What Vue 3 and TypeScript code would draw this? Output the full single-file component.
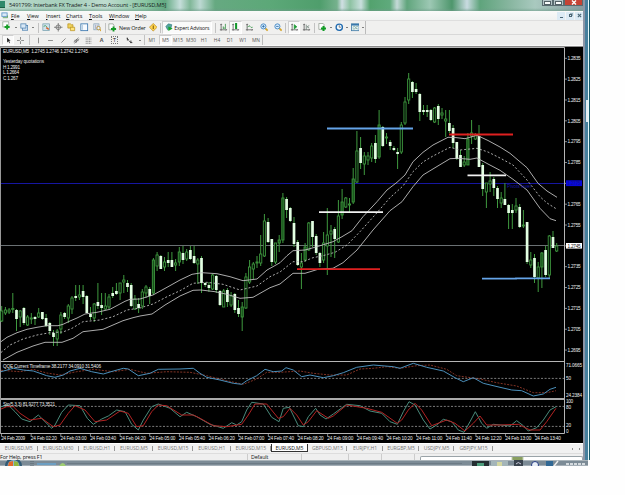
<script setup lang="ts">
type Candle = [number, number, number, number, string]

const menus = [
  { name: 'File', w: 16 }, { name: 'View', w: 19 }, { name: 'Insert', w: 20 }, { name: 'Charts', w: 23 },
  { name: 'Tools', w: 20 }, { name: 'Window', w: 26 }, { name: 'Help', w: 14 },
]

const mainTools: [string, number][] = [
  ['chart', 11], ['dd', 5], ['profiles', 12], ['dd', 6], ['sep', 4], ['market', 12], ['cross', 13], ['folder', 13],
  ['window', 13], ['tester', 12], ['sep', 4], ['order', 11], ['t:New Order', 29], ['diamond', 12], ['sep', 3],
  ['expert', 50], ['sep', 6], ['bars', 11], ['candle', 13], ['line', 14], ['zoomin', 17], ['zoomout', 10], ['sep', 5],
  ['scroll', 12], ['shift', 13], ['sep', 3], ['indicator', 12], ['dd', 5], ['clock', 12], ['dd', 4], ['template', 12], ['dd', 5],
]
const drawTools: [string, number][] = [
  ['cursor', 12], ['plus', 13], ['sep', 5], ['vline', 12], ['hline', 13], ['trend', 13], ['channel', 12], ['fibo', 13],
  ['letter', 13], ['label', 13], ['arrows', 16], ['dd', 5], ['sep', 4],
]
const periods = ['M1', 'M5', 'M15', 'M30', 'H1', 'H4', 'D1', 'W1', 'MN']

const tabs: [string, number][] = [
  ['EURUSD,M5', 37.5], ['EURUSD,M30', 41], ['EURUSD,H1', 36.5], ['EURUSD,M5', 38], ['EURUSD,M15', 40], ['EURUSD,H1', 37.5],
  ['EURUSD,M15', 40.5], ['EURUSD,M5', 37], ['GBPUSD,M15', 39], ['EURJPY,H1', 36], ['EURGBP,M5', 36], ['USDJPY,M5', 35],
  ['GBPJPY,M15', 39],
]

// high, body top, body bottom, low, kind: u = hollow, d = white, g = green filled
const candles: Candle[] = [
  [306, 311, 321, 322, 'u'], [307, 310, 313, 315, 'u'], [308, 310, 312, 314, 'u'], [293, 308.5, 309.5, 313, 'u'], [309, 310, 319, 331, 'd'],
  [310, 311, 317, 327, 'u'], [307, 308, 323, 325, 'd'], [315, 317, 325, 326, 'u'], [313, 318, 319, 324, 'u'], [316, 317, 319, 325, 'd'],
  [308, 313, 317, 318, 'u'], [312, 312, 319, 320, 'd'], [314, 318, 326, 327, 'd'], [322, 323, 331, 335, 'd'], [330, 333, 337, 346, 'd'],
  [329, 331, 339, 346, 'u'], [312, 315, 329, 334, 'u'], [312, 313, 317, 319, 'd'], [304, 306, 318, 323, 'u'], [296, 298, 309, 314, 'u'],
  [285, 296, 298, 301, 'd'], [285, 295, 297, 300, 'u'], [285, 291, 297, 304, 'd'], [295, 296, 313, 313, 'd'], [307, 314, 317, 320, 'd'],
  [303, 304, 318, 322, 'u'], [283, 302, 306, 309, 'd'], [293, 305, 308, 315, 'd'], [293, 306, 309, 310, 'u'], [294, 297, 307, 309, 'u'],
  [287, 293, 296, 298, 'd'], [283, 291, 294, 295, 'd'], [283, 283, 293, 300, 'u'], [275, 280, 282, 293, 'u'], [280, 283, 287, 292, 'd'],
  [283, 285, 306, 307, 'd'], [295, 299, 309, 310, 'u'], [298, 304, 308, 313, 'd'], [289, 292, 306, 309, 'u'], [285, 287, 293, 298, 'u'],
  [287, 289, 296, 304, 'd'], [258, 260, 293, 295, 'g'], [252, 255, 266, 271, 'u'], [255, 256, 269, 269, 'd'], [257, 262, 267, 271, 'u'],
  [252, 260, 263, 267, 'd'], [252, 260, 267, 267, 'd'], [259, 263, 265, 271, 'u'], [247, 252, 262, 266, 'g'], [246, 253, 260, 264, 'd'],
  [249, 252, 259, 261, 'u'], [246, 250, 259, 260, 'd'], [246, 256, 263, 264, 'd'], [258, 260, 264, 284, 'u'], [256, 258, 283, 293, 'd'],
  [282, 283, 285, 287, 'd'], [282, 285, 288, 292, 'd'], [274, 275, 289, 290, 'u'], [275, 276, 290, 293, 'd'], [290, 291, 305, 306, 'd'],
  [289, 291, 307, 307, 'u'], [288, 290, 302, 307, 'd'], [292, 296, 305, 307, 'u'], [293, 294, 310, 313, 'd'], [300, 308, 314, 317, 'd'],
  [302, 307, 317, 331, 'g'], [273, 277, 308, 309, 'u'], [260, 267, 282, 284, 'u'], [262, 264, 269, 279, 'u'], [256, 262, 263, 268, 'u'],
  [235, 254, 263, 266, 'u'], [214, 221, 256, 257, 'u'], [218, 222, 242, 243, 'd'], [239, 239, 262, 266, 'd'], [243, 243, 262, 264, 'u'],
  [235, 240, 243, 252, 'g'], [193, 198, 240, 243, 'g'], [197, 199, 210, 218, 'd'], [207, 208, 221, 222, 'd'], [217, 223, 244, 247, 'd'],
  [240, 242, 265, 266, 'd'], [253, 263, 267, 289, 'u'], [243, 247, 260, 262, 'g'], [222, 223, 250, 251, 'u'], [221, 221, 237, 247, 'd'],
  [234, 236, 253, 255, 'd'], [252, 253, 263, 267, 'd'], [232, 243, 260, 263, 'u'], [208, 235, 246, 275, 'u'], [225, 231, 234, 257, 'u'],
  [227, 229, 239, 258, 'd'], [200, 216, 242, 243, 'u'], [189, 202, 215, 219, 'g'], [197, 198, 207, 208, 'u'], [198, 204, 205, 213, 'u'],
  [168, 179, 202, 204, 'g'], [131, 151, 182, 183, 'u'], [137, 148, 163, 169, 'd'], [152, 156, 164, 175, 'u'], [152, 156, 160, 165, 'u'],
  [143, 146, 158, 162, 'u'], [135, 143, 159, 163, 'd'], [110, 125, 157, 159, 'g'], [126, 127, 146, 147, 'd'], [133, 137, 138, 144, 'u'],
  [140, 142, 146, 150, 'd'], [146, 148, 150, 151, 'd'], [148, 152, 154, 169, 'd'], [122, 125, 152, 154, 'u'], [97, 102, 123, 125, 'u'],
  [73, 79, 100, 104, 'u'], [81, 82, 92, 98, 'd'], [83, 89, 92, 94, 'd'], [93, 94, 112, 121, 'd'], [105, 110, 112, 115, 'd'],
  [105, 110, 112, 117, 'd'], [109, 110, 120, 121, 'd'], [107, 108, 122, 123, 'u'], [104, 106, 119, 125, 'd'], [108, 113, 115, 119, 'u'],
  [110, 119, 121, 137, 'u'], [110, 123, 131, 133, 'd'], [125, 128, 143, 148, 'd'], [142, 142, 159, 160, 'd'], [150, 155, 167, 167, 'd'],
  [156, 162, 165, 167, 'u'], [133, 139, 165, 165, 'g'], [120, 133, 136, 144, 'u'], [133, 135, 139, 140, 'u'], [125, 136, 167, 167, 'd'],
  [163, 165, 189, 196, 'd'], [183, 183, 192, 208, 'u'], [172, 181, 184, 192, 'u'], [177, 179, 188, 196, 'd'], [186, 188, 199, 208, 'd'],
  [192, 198, 203, 208, 'u'], [183, 199, 205, 205, 'd'], [204, 205, 213, 229, 'd'], [204, 210, 213, 229, 'd'], [198, 206, 210, 213, 'u'],
  [204, 207, 227, 228, 'd'], [210, 225, 226, 228, 'u'], [222, 222, 262, 264, 'd'], [252, 260, 265, 268, 'u'], [254, 258, 277, 283, 'd'],
  [262, 267, 278, 292, 'u'], [252, 253, 267, 288, 'g'], [246, 250, 275, 277, 'd'], [235, 236, 275, 278, 'u'], [231, 237, 248, 248, 'd'],
  [243, 246, 251, 252, 'u'],
]
const cx = (i: number): number => 1.7 + 3.7 * i

const upper = '1,341.7 7,337.3 17,332.7 27,329.3 37,327.3 47,325.7 58,325.7 63,324.3 70,321 77,318 85,314 97,312.3 110,309.3 125,301.3 130,299.3 140,299 153,295 167,287.3 180,280 192,274.3 202,272.7 217,273.7 230,276.7 243,280.7 257,279 267,270 273,266.7 280,262.7 287,255.7 293,250.7 305,250 317,246.7 333,241.7 342,236.7 352,230.7 363,216.7 377,201.7 387,190 397,182.3 405,175 413,161.7 423,152.3 433,145 448,137.3 456,137.6 465,138.7 477,135.3 488,140.5 500,147 510,153.3 527,167.7 538,183.3 547,191 557,197.3'
const middle = '1,352.5 10,345 23,339 37,335 50,332.7 63,332 72,328.3 83,321.7 100,320 113,316.7 127,310 140,308 153,304 167,296.7 180,290.7 193,283.3 207,282.3 223,284.3 240,290 257,286 270,276.7 280,272 293,261.7 303,261.7 313,257.7 323,255.7 335,252.3 347,245 360,231.7 377,212.7 390,197.7 403,186 413,171.7 423,162 433,156 450,147.3 460,150 477,148.3 488,152 500,158 513,165 527,180 540,196.7 547,203 557,209.3'
const lower = '3,360 17,352.3 33,346 45,342.3 62,342.3 73,338.3 83,331.7 103,329.3 123,320.7 133,317.7 140,316 152,314 165,305 180,296 193,290.3 201,290 215,291.7 227,294.3 240,298.3 253,297.3 270,287.7 280,284 293,273.3 305,273.3 318,269.3 333,268.3 343,262.7 357,250 373,230 390,210.7 402,201.7 413,186.7 423,175 437,166.5 450,158.7 458,158.3 470,159.3 477,158 488,164 500,170.3 513,179.3 527,190 540,208.3 550,218.7 556,220.7'

// oscillator series are kept at three units per pixel
const scale = (pts: number[][]): string => pts.map(([x, y]) => `${(x / 3).toFixed(1)},${(355 + y / 3).toFixed(1)}`).join(' ')
const qqeFast = scale([[3, 50], [40, 40], [70, 45], [100, 48], [120, 55], [140, 62], [165, 67], [190, 60], [210, 48], [240, 40], [275, 50], [310, 57], [340, 48], [370, 40], [385, 42], [415, 62], [450, 55], [475, 43], [540, 42], [580, 40], [600, 55], [620, 67], [660, 75], [700, 85], [725, 88], [740, 77], [770, 62], [795, 43], [820, 50], [845, 48], [858, 38], [880, 45], [905, 65], [930, 60], [970, 68], [1000, 62], [1030, 53], [1070, 37], [1120, 30], [1180, 35], [1200, 40], [1240, 25], [1280, 37], [1330, 48], [1365, 68], [1390, 80], [1420, 68], [1450, 85], [1500, 97], [1535, 105], [1565, 107], [1600, 123], [1630, 117], [1650, 103], [1668, 97]])
const qqeSlow = scale([[3, 46], [60, 50], [100, 43], [140, 54], [180, 60], [230, 50], [280, 43], [340, 50], [390, 43], [440, 55], [500, 50], [570, 52], [620, 62], [680, 77], [730, 88], [770, 72], [800, 52], [840, 52], [900, 48], [940, 55], [990, 60], [1040, 60], [1080, 42], [1120, 40], [1160, 35], [1200, 40], [1250, 32], [1290, 30], [1340, 43], [1370, 62], [1440, 72], [1490, 83], [1550, 93], [1600, 113], [1640, 113], [1668, 107]])
const stochMain = scale([[3, 155], [25, 150], [45, 170], [65, 192], [90, 200], [115, 180], [135, 200], [155, 220], [165, 210], [185, 172], [205, 150], [240, 152], [262, 190], [280, 208], [305, 192], [325, 183], [350, 165], [375, 170], [395, 208], [415, 225], [430, 195], [455, 155], [475, 147], [510, 160], [540, 185], [560, 172], [590, 185], [630, 208], [670, 220], [695, 203], [710, 210], [725, 200], [740, 165], [755, 142], [790, 147], [815, 187], [837, 200], [850, 160], [868, 157], [895, 212], [910, 215], [925, 185], [947, 160], [960, 180], [978, 192], [1000, 177], [1040, 148], [1080, 152], [1110, 168], [1145, 175], [1170, 200], [1192, 208], [1210, 170], [1227, 140], [1245, 150], [1270, 195], [1290, 222], [1310, 210], [1330, 193], [1355, 200], [1375, 225], [1392, 232], [1410, 200], [1426, 170], [1445, 205], [1460, 220], [1480, 208], [1530, 213], [1550, 197], [1570, 212], [1585, 228], [1610, 218], [1630, 195], [1650, 165], [1668, 155]])
const stochSignal = scale([[3, 162], [20, 155], [40, 155], [60, 175], [90, 195], [125, 190], [160, 215], [180, 210], [205, 175], [225, 152], [255, 165], [285, 200], [320, 195], [360, 168], [385, 175], [410, 215], [430, 212], [455, 170], [475, 150], [500, 152], [545, 180], [580, 180], [600, 190], [640, 212], [680, 215], [725, 208], [745, 180], [765, 147], [800, 147], [835, 190], [850, 185], [870, 160], [890, 180], [910, 210], [925, 200], [950, 167], [985, 190], [1000, 183], [1040, 150], [1100, 160], [1145, 172], [1192, 205], [1205, 195], [1225, 165], [1245, 145], [1265, 165], [1295, 212], [1340, 195], [1365, 205], [1395, 228], [1420, 205], [1440, 183], [1460, 210], [1500, 210], [1555, 208], [1590, 225], [1620, 225], [1640, 200], [1668, 160]])

const prices: string[] = Array.from({ length: 15 }, (_, i) => (1.2835 - i * 0.001).toFixed(4))
const times = ['2009', '02:20', '03:00', '03:40', '04:20', '05:00', '05:40', '06:20', '07:00', '07:40', '08:20', '09:00', '09:40', '10:20', '11:00', '11:40', '12:20', '13:00', '13:40']
</script>

<template>
  <div class="screen">
    <div class="window">
      <div class="body">
        <div class="title">
          <i class="appicon"></i>
          <span class="caption">5491799: Interbank FX Trader 4 - Demo Account - [EURUSD,M5]</span>
          <div class="winbtns">
            <b class="min"></b><b class="max"></b>
            <b class="close"><svg viewBox="0 0 6 5"><path d="M1 .5l4 4M5 .5l-4 4" stroke="#fff" stroke-width="1.4" /></svg></b>
          </div>
        </div>
        <div class="menu">
          <svg class="menuicon" viewBox="0 0 8 8"><rect x="1" y="1" width="6" height="4" fill="#dcebf8" stroke="#5d93c4" /><path d="M2 6.5h5.5V4" fill="none" stroke="#5aa05a" /></svg>
          <span v-for="m in menus" :key="m.name" :style="{ width: m.w + 'px' }"><u>{{ m.name[0] }}</u>{{ m.name.slice(1) }}</span>
          <div class="childbtns">
            <b><i class="c-min"></i></b><b><i class="c-max"></i></b>
            <b><svg viewBox="0 0 6 6"><path d="M1 1l4 4M5 1L1 5" stroke="#486675" stroke-width="1.3" /></svg></b>
          </div>
        </div>
        <div class="bar first">
          <div v-for="([kind, w], i) in mainTools" :key="i" class="tool" :class="[kind.startsWith('t:') ? 'text' : kind]" :style="{ width: w + 'px' }">
            <i v-if="kind === 'sep'" class="sep"></i>
            <i v-else-if="kind === 'dd'" class="arrow"></i>
            <span v-else-if="kind.startsWith('t:')">{{ kind.slice(2) }}</span>
            <template v-else>
              <svg viewBox="0 0 10 10">
                <g v-if="kind === 'chart'"><rect x="1" y="1" width="7" height="6" fill="#fff" stroke="#8aa08a" stroke-width=".8" /><path d="M6 4v6M3 7h6" stroke="#18a028" stroke-width="2.2" /></g>
                <g v-else-if="kind === 'profiles'" fill="#d8e8f6" stroke="#4d80b0" stroke-width=".9"><rect x="3" y="3" width="6" height="5.5" /><rect x="1" y="1" width="6" height="5" /></g>
                <g v-else-if="kind === 'market'"><rect x="1" y="1" width="8" height="8" fill="#cfe2ec" stroke="#6f9cab" stroke-width=".8" /><path d="M2 4l2-1 2 2" stroke="#3b9a53" fill="none" /><path d="M5 5.5l3 2" stroke="#d6602b" stroke-width="1.6" /></g>
                <g v-else-if="kind === 'cross'" fill="none" stroke="#666" stroke-width=".9"><circle cx="5" cy="5" r="2.7" /><path d="M5 0v10M0 5h10" /></g>
                <g v-else-if="kind === 'folder'"><path d="M1 1h3l1 1h2v4H1z" fill="#f0d35c" stroke="#b48c19" stroke-width=".8" /><path d="M4 5h5v4H4z" fill="#ffe47a" stroke="#b48c19" stroke-width=".8" /></g>
                <g v-else-if="kind === 'window'"><rect x="1" y="1" width="8" height="8" fill="#f7fbff" stroke="#3c78b0" stroke-width="1" /><path d="M3 2v6" stroke="#a9c4dc" /></g>
                <g v-else-if="kind === 'tester'"><rect x="1" y="1" width="6" height="7" fill="#e5edf2" stroke="#7d9bb2" stroke-width=".8" /><path d="M3 2v5M5 2v5" stroke="#88a" stroke-width=".7" /><circle cx="6.5" cy="6" r="2" fill="#e8f4ff" stroke="#b58b2d" /><path d="M8 7.5l2 2" stroke="#d49b20" stroke-width="1.4" /></g>
                <g v-else-if="kind === 'order'"><path d="M1 1h5l1 2v5H1z" fill="#fff" stroke="#849184" stroke-width=".8" /><path d="M6.5 4v6M3.5 7h6" stroke="#169b27" stroke-width="2.2" /></g>
                <g v-else-if="kind === 'diamond'"><path d="M5 .5L9.5 5 5 9.5.5 5z" fill="#ffd54f" stroke="#b88514" stroke-width=".8" /><path d="M5 3v4" stroke="#7a5608" stroke-width="1.2" /></g>
                <g v-else-if="kind === 'expert'"><path d="M1 4l3-3 4 1-1 4-4 2z" fill="#57a7a0" stroke="#257078" stroke-width=".7" /><path d="M4 4l5 2.5-5 3z" fill="#15a52a" /></g>
                <g v-else-if="['bars', 'candle', 'line', 'scroll', 'shift'].includes(kind)" fill="none" stroke="#555" stroke-width=".9">
                  <path d="M2.5 1v8M1 8h8M1.5 2.2l1-1 1 1M8 7l1 1-1 1" />
                  <path v-if="kind === 'bars'" d="M5 4v3M7.5 1v6M5 6h2" stroke="#278e39" />
                  <path v-else-if="kind === 'candle'" d="M6 0v7M6 1.5v4" stroke="#12972a" stroke-width="2.4" />
                  <path v-else-if="kind === 'line'" d="M3 5q2-3 3-1t3 1" stroke="#278e39" />
                  <path v-else-if="kind === 'scroll'" d="M5 2v5l3-2.5z" fill="#1b9b33" stroke="#1b9b33" />
                  <path v-else d="M5 2v6M8.5 3L6 4.5 8.5 6" stroke="#667b72" />
                </g>
                <g v-else-if="kind === 'zoomin' || kind === 'zoomout'"><path d="M6 6l3 3" stroke="#d4a42c" stroke-width="2" /><circle cx="4" cy="4" r="3" fill="#dceeff" stroke="#397fbd" /><path :d="kind === 'zoomin' ? 'M4 2.5v3M2.5 4h3' : 'M2.5 4h3'" stroke="#286da8" /></g>
                <g v-else-if="kind === 'indicator'"><path d="M1 .5h5l1 1v6H1z" fill="#fff" stroke="#859085" stroke-width=".8" /><path d="M6.5 3.5v6M3.5 6.5h6" stroke="#109c25" stroke-width="2.4" /></g>
                <g v-else-if="kind === 'clock'"><circle cx="5" cy="5" r="3.7" fill="#f5fbff" stroke="#236cb0" stroke-width="1.6" /><path d="M5 2.5V5h2" fill="none" stroke="#555" stroke-width=".8" /></g>
                <g v-else-if="kind === 'template'"><rect x=".5" y="1" width="9" height="8" fill="#e5f1f7" stroke="#467fa8" /><path d="M.5 2h9" stroke="#3978ac" stroke-width="2" /><path d="M2 5l2-1 1 1 3-1M2 7h2l1-1 3 1" fill="none" stroke="#598c73" stroke-width=".7" /></g>
              </svg>
              <span v-if="kind === 'expert'">Expert Advisors</span>
            </template>
          </div>
        </div>
        <div class="bar second">
          <div v-for="([kind, w], i) in drawTools" :key="i" class="tool" :class="kind" :style="{ width: w + 'px' }">
            <i v-if="kind === 'sep'" class="sep"></i>
            <i v-else-if="kind === 'dd'" class="arrow"></i>
            <span v-else-if="kind === 'letter'">A</span>
            <span v-else-if="kind === 'label'" class="boxed">T</span>
            <svg v-else viewBox="0 0 10 10" fill="none" stroke="#666" stroke-width="1">
              <path v-if="kind === 'cursor'" d="M3 1v7l2-2 1 3 1-.5-1-3h2z" fill="#222" stroke="none" />
              <path v-else-if="kind === 'plus'" d="M5 0v4M5 6v4M0 5h4M6 5h4" />
              <path v-else-if="kind === 'vline'" d="M5 1v8" />
              <path v-else-if="kind === 'hline'" d="M1.500 5h7" />
              <path v-else-if="kind === 'trend'" d="M2 8l6-6" />
              <path v-else-if="kind === 'channel'" d="M1 7l7-6M2 9l7-6M3 4v4M5 3v5M7 3v3" />
              <path v-else-if="kind === 'fibo'" d="M1 1.500h8M1 4h8M1 6.500h8M1 9h8" stroke-dasharray="1.5 .8" />
              <path v-else d="M1 2l3 2M2 1v4M4 5l3 3M6 8h3M7 5v3" stroke="#333" stroke-width="1.3" />
            </svg>
          </div>
          <span v-for="p in periods" :key="p" class="period" :class="{ on: p === 'M5' }">{{ p }}</span>
        </div>
        <svg class="chart" viewBox="0 46 583 397" width="583" height="397">
          <rect x="0" y="46" width="583" height="397" fill="#000" />
          <g shape-rendering="crispEdges">
            <rect x="0" y="46" width="583" height="1" fill="#8c8c8c" />
            <rect x="0" y="47" width="1" height="387" fill="#999" />
            <rect x="1" y="183" width="563" height="1" fill="#1616a0" />
            <rect x="1" y="245" width="563" height="1" fill="#6a7073" />
          </g>
          <path d="M1 47.5H564.5V433.5H1M1 361.5H564" fill="none" stroke="#b5b5b5" />
          <rect x="1" y="398" width="564" height="2" fill="#aaa" />

          <g v-for="([h, t, b, l, k], i) in candles" :key="i">
            <line :x1="cx(i)" :x2="cx(i)" :y1="h" :y2="k === 'u' ? t : l" stroke="#3f9a3f" />
            <line v-if="k === 'u'" :x1="cx(i)" :x2="cx(i)" :y1="b" :y2="l" stroke="#3f9a3f" />
            <rect :x="cx(i) - (k === 'd' ? 1.35 : 1.1)" :y="t" :width="k === 'd' ? 2.7 : 2.2" :height="Math.max(b - t, 1)"
              :fill="k === 'd' ? '#e2ffe2' : k === 'g' ? '#17501b' : '#031006'" :stroke="k === 'd' ? 'none' : '#3f9a3f'" stroke-width=".85" />
          </g>

          <g fill="none" stroke="#bebebe" stroke-width=".9">
            <polyline :points="upper" /><polyline :points="lower" />
            <polyline :points="middle" stroke-dasharray="2 2" />
          </g>
          <g stroke-width="1.8">
            <path d="M327 128.5H413" stroke="#65a4e8" /><path d="M482 278.7H516L516 278.3H550" fill="none" stroke="#65a4e8" />
            <path d="M319 212.2H383M467.5 175.3H506" stroke="#f2f2f2" />
            <path d="M297 269.2H380M449 134.5H513" stroke="#df2020" />
          </g>
          <text x="507" y="188" textLength="24" class="t pivot">Pivots level</text>

          <g stroke="#999" stroke-width=".8" stroke-dasharray="2 1.6"><path d="M1 378.4H564M1 406.4H564M1 426.4H564" /></g>
          <g fill="none" stroke-width="1">
            <polyline :points="qqeSlow" stroke="#a2402e" stroke-width=".8" stroke-dasharray="2 1.3" /><polyline :points="qqeFast" stroke="#4b8fba" />
            <polyline :points="stochMain" stroke="#4a8b7c" /><polyline :points="stochSignal" stroke="#b32323" />
          </g>

          <g class="t">
            <text x="3" y="53" textLength="85">EURUSD,M5&#160; 1.2745 1.2746 1.2742 1.2745</text>
            <text x="3" y="63" textLength="41">Yesterday quotations</text>
            <text x="3" y="68.6" textLength="17">H 1.2991</text>
            <text x="3" y="74.2" textLength="16">L 1.2664</text>
            <text x="3" y="79.8" textLength="15">C 1.267</text>
            <text x="3" y="368.3" textLength="98">QQE Current Timeframe 38.2177 34.0910 31.5406</text>
            <text x="3" y="405.8" textLength="52">Sto(5,3,3) 81.9277 73.3521</text>
            <g v-for="(p, i) in prices" :key="p">
              <path :d="`M565 ${58.3 + i * 20.84}h2`" stroke="#aaa" stroke-width=".8" />
              <rect v-if="i === 6" x="566" y="180.3" width="16" height="5.8" fill="#0808d8" />
              <rect v-if="i === 9" x="566" y="243" width="16" height="5.6" fill="#fff" />
              <text x="567.5" :y="60 + i * 20.84" textLength="13.2" :class="{ navy: i === 6, dark: i === 9 }">{{ p }}</text>
            </g>
            <text x="566" y="367" textLength="16">71.0665</text>
            <text x="566" y="380" textLength="5">50</text>
            <text x="566" y="396.6" textLength="16">24.2384</text>
            <text x="566" y="403.2" textLength="7">100</text>
            <text x="566" y="408.7" textLength="5">80</text>
            <text x="566" y="427" textLength="5">20</text>
            <text x="566" y="432.6">0</text>
            <g v-for="(t, i) in times" :key="t">
              <path :d="`M${1.5 + i * 29.65} 434v2.500`" stroke="#aaa" stroke-width=".8" />
              <text :x="1.2 + i * 29.65" y="439.6" :textLength="i ? 26 : 24">24 Feb {{ t }}</text>
            </g>
          </g>
        </svg>
        <div class="tabs">
          <span v-for="([name, w], i) in tabs" :key="i" :class="{ active: i === 7 }" :style="{ width: w + 'px' }">{{ name }}</span>
          <div class="scroller"><i></i><i class="r"></i></div>
        </div>
        <div class="status">
          <span class="help">For Help, press F1</span><span class="profile">Default</span><span class="c3"></span><span class="c4"></span><span class="c5"></span>
          <span class="c6"><i></i></span>
        </div>
      </div>
      <div class="edge"></div>
    </div>
    <svg class="taskbar" viewBox="0 0 588 6" width="588" height="6">
      <rect width="588" height="6" fill="#7c8b96" /><rect width="588" height="1" fill="#aab4ba" /><rect y="5" width="588" height="1" fill="#a4aeb6" />
      <circle cx="13.5" cy="6" r="8.5" fill="#315b76" /><circle cx="13.5" cy="6" r="6" fill="#8fb7ce" />
      <path d="M9 2l4-1v5H8z" fill="#e3692c" /><path d="M14 1l4 1 1 4h-5z" fill="#91b83f" />
      <path d="M31 1v5M33 1v5" stroke="#59666f" stroke-dasharray="1 1" /><rect x="37" y="3" width="19" height="2" fill="#6c9ec2" /><path d="M59 6q4-6 7 0z" fill="#9fce72" />
      <path d="M67 3.500H462" stroke="#6c7a85" />
      <rect x="472" y="1" width="17" height="5" fill="#242e32" /><rect x="477" y="3" width="7" height="3" fill="#4c9d7c" />
      <rect x="491" y="1" width="17" height="5" fill="#a4b5b9" /><rect x="497" y="2" width="5" height="4" fill="#d4d7a2" />
      <rect x="514" y="0" width="9" height="6" fill="#39434e" /><path d="M516 4q2-3 5 0" stroke="#ccd" fill="none" />
      <circle cx="535" cy="5" r="3.500" fill="#e7eef6" stroke="#263c83" /><rect x="546" y="1" width="7" height="5" fill="#316894" /><path d="M554 6l4-5" stroke="#eee" stroke-width="1.5" />
      <path d="M566 4h19" stroke="#d4dade" stroke-width="1.8" stroke-dasharray="3 1" />
    </svg>
  </div>
</template>

<style>
body { background: #fff; overflow: hidden; }
</style>

<style scoped>
.screen { width: 625px; height: 495px; background: #fefefe; font-family: "Open Sans", "Noto Sans", sans-serif; color: #333; overflow: hidden; }
.window { display: flex; width: 590px; height: 460px; }
.body { width: 583px; display: flex; flex-direction: column; overflow: hidden; }
.edge { width: 7px; height: 460px; background: linear-gradient(#e4edf2, #e4edf2) 3px 100px / 2px 22px no-repeat, linear-gradient(90deg, #8c95a6 0 2px, #467f9d 2px 5px, #e6f8fa 5px 6px, #17596a 6px); }
.title { height: 11px; flex: none; display: flex; align-items: center; background: linear-gradient(180deg, #fff0 8px, #6e9c8999), linear-gradient(90deg, #b9d9cb 0, #a5cfbb 70px, #bfdccf 105px, #8cc8a5 145px, #62a981 165px, #c6dedb 180px, #80b798 190px, #bdd9d3 200px, #66a981 215px, #5ca878 270px, #4f9e6c 320px, #76b18d 337px, #d1dfe4 342px, #8dc2a2 350px, #c9dfdd 361px, #53a26e 370px, #5faa7c 390px, #c5dad8 397px, #60a57c 407px, #9dc8b4 430px, #4e966c 452px, #c9dbe1 467px, #5fa47c 480px, #88b6a0 510px, #a9c9bf 535px, #879aa0 583px); }
.appicon { width: 5px; height: 6px; margin-bottom: 2px; background: #2e896a; border-bottom: 1px solid #196143; }
.caption { margin: -2px 0 0 4px; font-size: 5.7px; letter-spacing: -.17px; white-space: nowrap; color: #17221e; }
.winbtns { margin-left: auto; align-self: flex-start; display: flex; height: 6px; }
.winbtns b { display: flex; justify-content: center; align-items: center; width: 11px; border: 1px solid #596b70; border-top: 0; box-sizing: border-box; background: #b5c4c7; }
.winbtns b::before { content: ""; width: 5px; height: 2px; background: #f8fbfb; border: .5px solid #536166; }
.winbtns .close { width: 19px; background: #c54234; }
.winbtns .close::before { display: none; }
.close svg { width: 6px; height: 5px; }
.menu { height: 10px; flex: none; display: flex; align-items: center; background: linear-gradient(#f9faf9, #f0f2f1); border-bottom: 1px solid #dedede; box-sizing: border-box; font-size: 5.5px; letter-spacing: -.08px; color: #111; }
.menu > span { white-space: nowrap; line-height: 8px; }
.menuicon { width: 7px; height: 7px; margin: 0 3px 0 1px; }
.childbtns { margin-left: auto; display: flex; gap: 1px; }
.childbtns b { width: 8px; height: 8px; display: flex; align-items: center; justify-content: center; background: #dcebf5; }
.childbtns svg { width: 5px; height: 5px; }
.childbtns .c-min { width: 3px; height: 1px; margin-top: 3px; background: #4a6675; }
.childbtns .c-max { width: 3px; height: 3px; border: 1px solid #4a6675; box-sizing: border-box; box-shadow: 1px -1px 0 #9bb0bc; }
.bar { display: flex; align-items: center; background: #f0f0ef; box-sizing: border-box; flex: none; padding-left: 2px; }
.first { height: 13px; }
.second { height: 12px; border-top: 1px solid #d8d8d8; border-bottom: 1px solid #fafafa; }
.first .tool:last-child, .period:last-child { border-right: 1px solid #bbb; }
.tool { height: 100%; box-sizing: border-box; display: flex; align-items: center; justify-content: center; flex: none; font-size: 5.4px; letter-spacing: -.1px; white-space: nowrap; color: #111; }
.tool svg { width: 8.5px; height: 8.5px; flex: none; }
.second .tool svg { width: 7px; height: 7px; }
.tool.text { justify-content: flex-start; padding-left: 1px; }
.tool.expert, .tool.candle, .tool.scroll, .second .tool.cursor { background: #fafafa; border: 1px solid #d0d0d0; border-right-color: #fff; border-bottom-color: #fff; }
.tool.expert { gap: 1px; font-size: 5.1px; letter-spacing: -.12px; }
i.sep { width: 1px; height: 10px; background: #c2c2c2; }
.arrow { width: 0; height: 0; border: 1.2px solid transparent; border-top: 1.6px solid #111; border-bottom: 0; }
.boxed { border: .5px dotted #777; line-height: 6px; padding: 0 1px; }
.letter { font-weight: 700; }
.second .letter { color: #555; }
.period { width: 13px; height: 100%; box-sizing: border-box; display: flex; align-items: center; justify-content: center; font-size: 4.9px; color: #555; border-right: 1px solid transparent; }
.period.on { background: #fafafa; border: 1px solid #ccc; border-right-color: #fff; border-bottom-color: #fff; }
.chart { display: block; flex: none; }
.t { font-size: 4.7px; fill: #ececec; font-family: "Liberation Sans", sans-serif; }
.t .dark { fill: #111; }
.t .navy { fill: #10108c; }
.pivot { fill: #1818a0; }
.tabs { height: 10px; flex: none; display: flex; background: #f1f1f1; border-top: 1px solid #fff; box-sizing: border-box; font-size: 5.1px; color: #777; }
.tabs > span { box-sizing: border-box; display: flex; align-items: center; justify-content: center; height: 8px; letter-spacing: -.1px; background: linear-gradient(#999, #999) right center / 1px 5px no-repeat; }
.tabs .active { background: #fff; border: 1px solid #333; border-top: 0; color: #111; }
.scroller { margin-left: auto; display: flex; gap: 6px; align-items: center; padding-right: 3px; }
.scroller i { border: 1.5px solid transparent; border-right-color: #333; border-left: 0; }
.scroller .r { border-left: 1.5px solid #333; border-right: 0; }
.status { height: 7px; flex: none; display: flex; background: #efefef; border-top: 1px solid #ddd; box-sizing: border-box; font-size: 5.3px; letter-spacing: -.1px; line-height: 7px; color: #111; }
.status > span { box-sizing: border-box; border-right: 1px solid #ccc; white-space: nowrap; }
.help { width: 248px; }
.profile { width: 54px; padding-left: 3px; }
.c3 { width: 47px; } .c4 { width: 33px; } .c5 { width: 33px; }
.status .c6 { flex: 1; padding: 2px 0 0 5px; border: 0; }
.c6 i { display: block; height: 5px; border: 1px solid #9aa3a8; border-bottom: 0; border-radius: 2px 2px 0 0; background: linear-gradient(90deg, #fff 0 90px, #899f60 92px 101px, #fff 103px); box-sizing: border-box; }
.taskbar { display: block; }
</style>
